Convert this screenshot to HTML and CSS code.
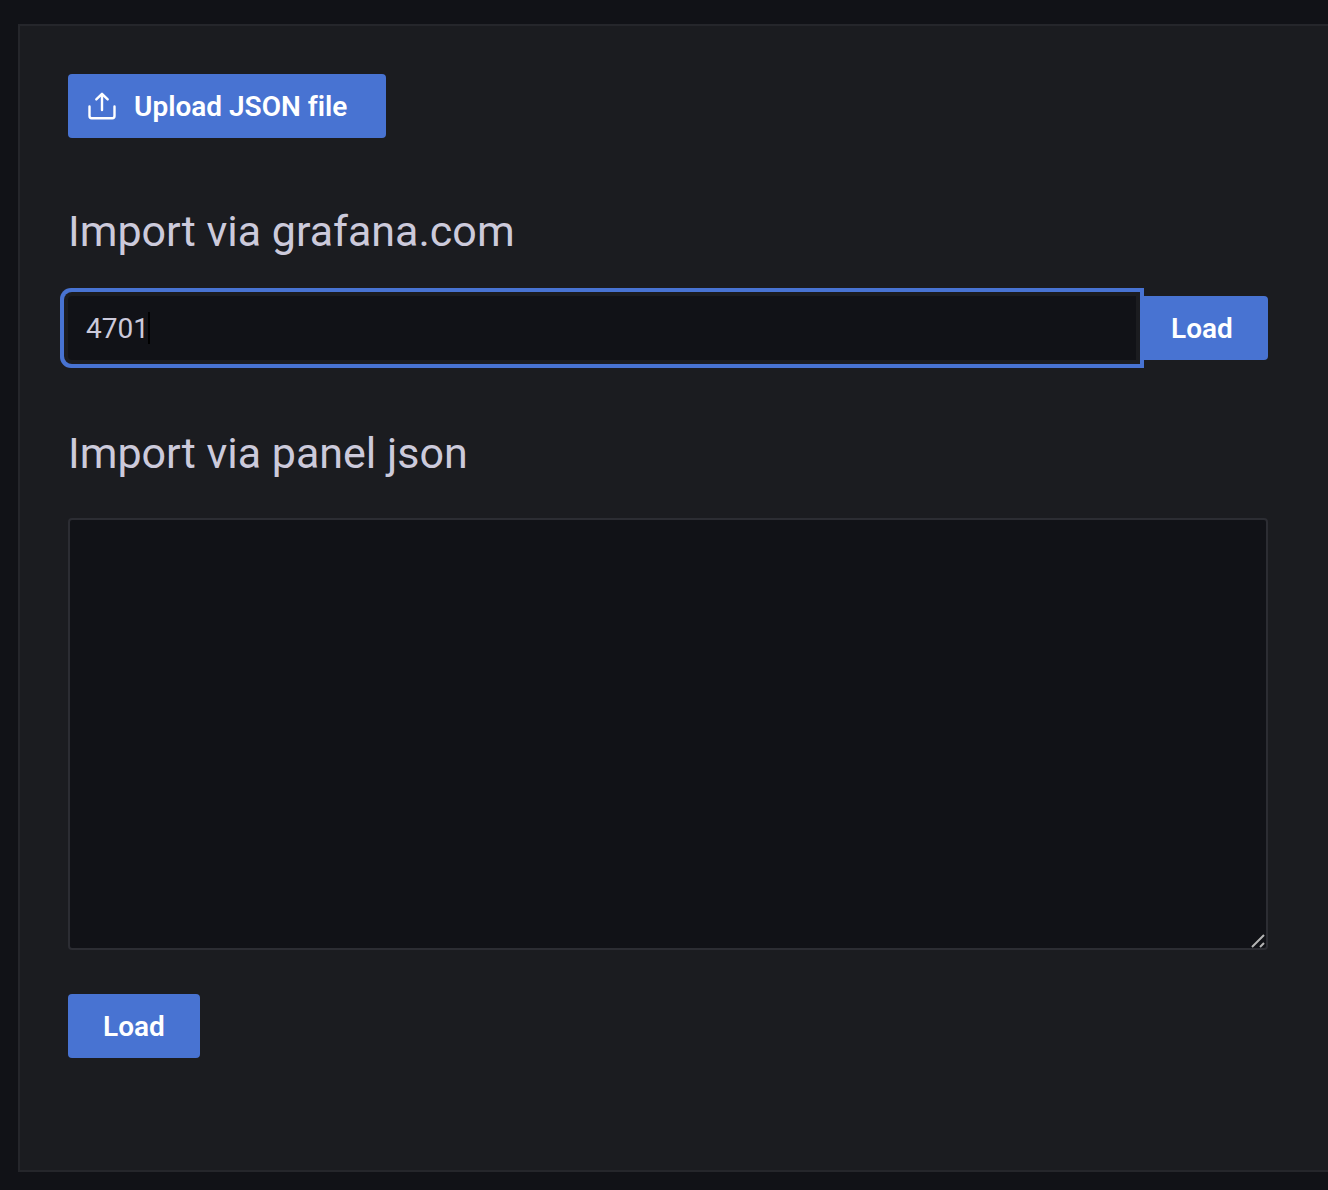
FILE: index.html
```html
<!DOCTYPE html>
<html lang="en">
<head>
  <meta charset="utf-8">
  <meta name="viewport" content="width=device-width, initial-scale=1">
  <title>Import dashboard</title>
  <link rel="stylesheet" href="styles.css">
</head>
<body>
  <main class="panel">
    <button type="button" class="button button--icon">
      <svg class="button__icon" viewBox="0 0 28 28" aria-hidden="true">
        <path d="M1.5 14.5V24Q1.5 26.2 3.7 26.2H24.3Q26.5 26.2 26.5 24V14.5M14 18V2M8.3 7.4L14 1.8L19.7 7.4"/>
      </svg>
      Upload JSON file
    </button>

    <form class="section">
      <h2 class="heading"><label for="gcom">Import via grafana.com</label></h2>
      <div class="input-row">
        <input class="input" id="gcom" type="text" value="4701">
        <button type="button" class="button button--attached">Load</button>
      </div>
    </form>

    <form class="section">
      <h2 class="heading"><label for="json">Import via panel json</label></h2>
      <textarea class="textarea" id="json"></textarea>
      <button type="button" class="button">Load</button>
    </form>
  </main>
</body>
</html>
```

FILE: styles.css
```css
:root {
  --canvas: #111217;
  --panel: #1b1c20;
  --line: #25262b;
  --field-line: #2c2d33;
  --primary: #4873d2;
  --text: #cccadb;
}

*,
*::before,
*::after {
  box-sizing: border-box;
}

body {
  margin: 0;
  padding: 24px 0 18px 18px;
  background: var(--canvas);
  color: var(--text);
  font-family: Roboto, "Liberation Sans", sans-serif;
  font-size: 28px;
  font-variant-ligatures: none;
}

.panel {
  padding: 48px 60px 112px 48px;
  background: var(--panel);
  border: 2px solid var(--line);
  border-right: 0;
}

.section {
  margin-top: 68px;
}

.heading {
  margin: 0 0 40px;
  font-size: 43px;
  font-weight: 400;
  line-height: 50px;
}

.button {
  display: flex;
  align-items: center;
  justify-content: center;
  min-width: 132px;
  height: 64px;
  padding: 0 34px;
  border: 0;
  border-radius: 4px;
  background: var(--primary);
  color: #fff;
  font: inherit;
  font-weight: 600;
  font-variant-ligatures: none;
  white-space: nowrap;
}

.button--icon {
  justify-content: flex-start;
  gap: 18px;
  min-width: 318px;
  padding-left: 20px;
}

.button__icon {
  width: 28px;
  height: 28px;
  fill: none;
  stroke: currentColor;
  stroke-width: 2.4;
  stroke-linecap: round;
  stroke-linejoin: round;
}

.button--attached {
  border-radius: 0 4px 4px 0;
}

.input-row {
  display: flex;
}

/* Focused field: a gap in the panel colour, then the ring. The gradient is the text cursor. */
.input {
  position: relative;
  flex: 1;
  min-width: 0;
  height: 64px;
  padding: 0 18px;
  border: 0;
  border-radius: 4px 0 0 4px;
  outline: 0;
  background: linear-gradient(#000, #000) 80px 16px / 2px 32px no-repeat var(--canvas);
  box-shadow: 0 0 0 4px var(--panel), 0 0 0 8px var(--primary);
  color: var(--text);
  font: inherit;
}

.textarea {
  display: block;
  width: 100%;
  height: 432px;
  margin-bottom: 44px;
  padding: 12px 16px;
  border: 2px solid var(--field-line);
  border-radius: 4px;
  outline: 0;
  background: var(--canvas);
  color: var(--text);
  font: inherit;
  resize: vertical;
}

.textarea::-webkit-resizer {
  background: url("data:image/svg+xml,%3Csvg xmlns='http://www.w3.org/2000/svg' width='15' height='15'%3E%3Cpath d='M1 14L13 2M9 14L13 10' stroke='%23b4b4b4' stroke-width='2'/%3E%3C/svg%3E") no-repeat;
}
```
